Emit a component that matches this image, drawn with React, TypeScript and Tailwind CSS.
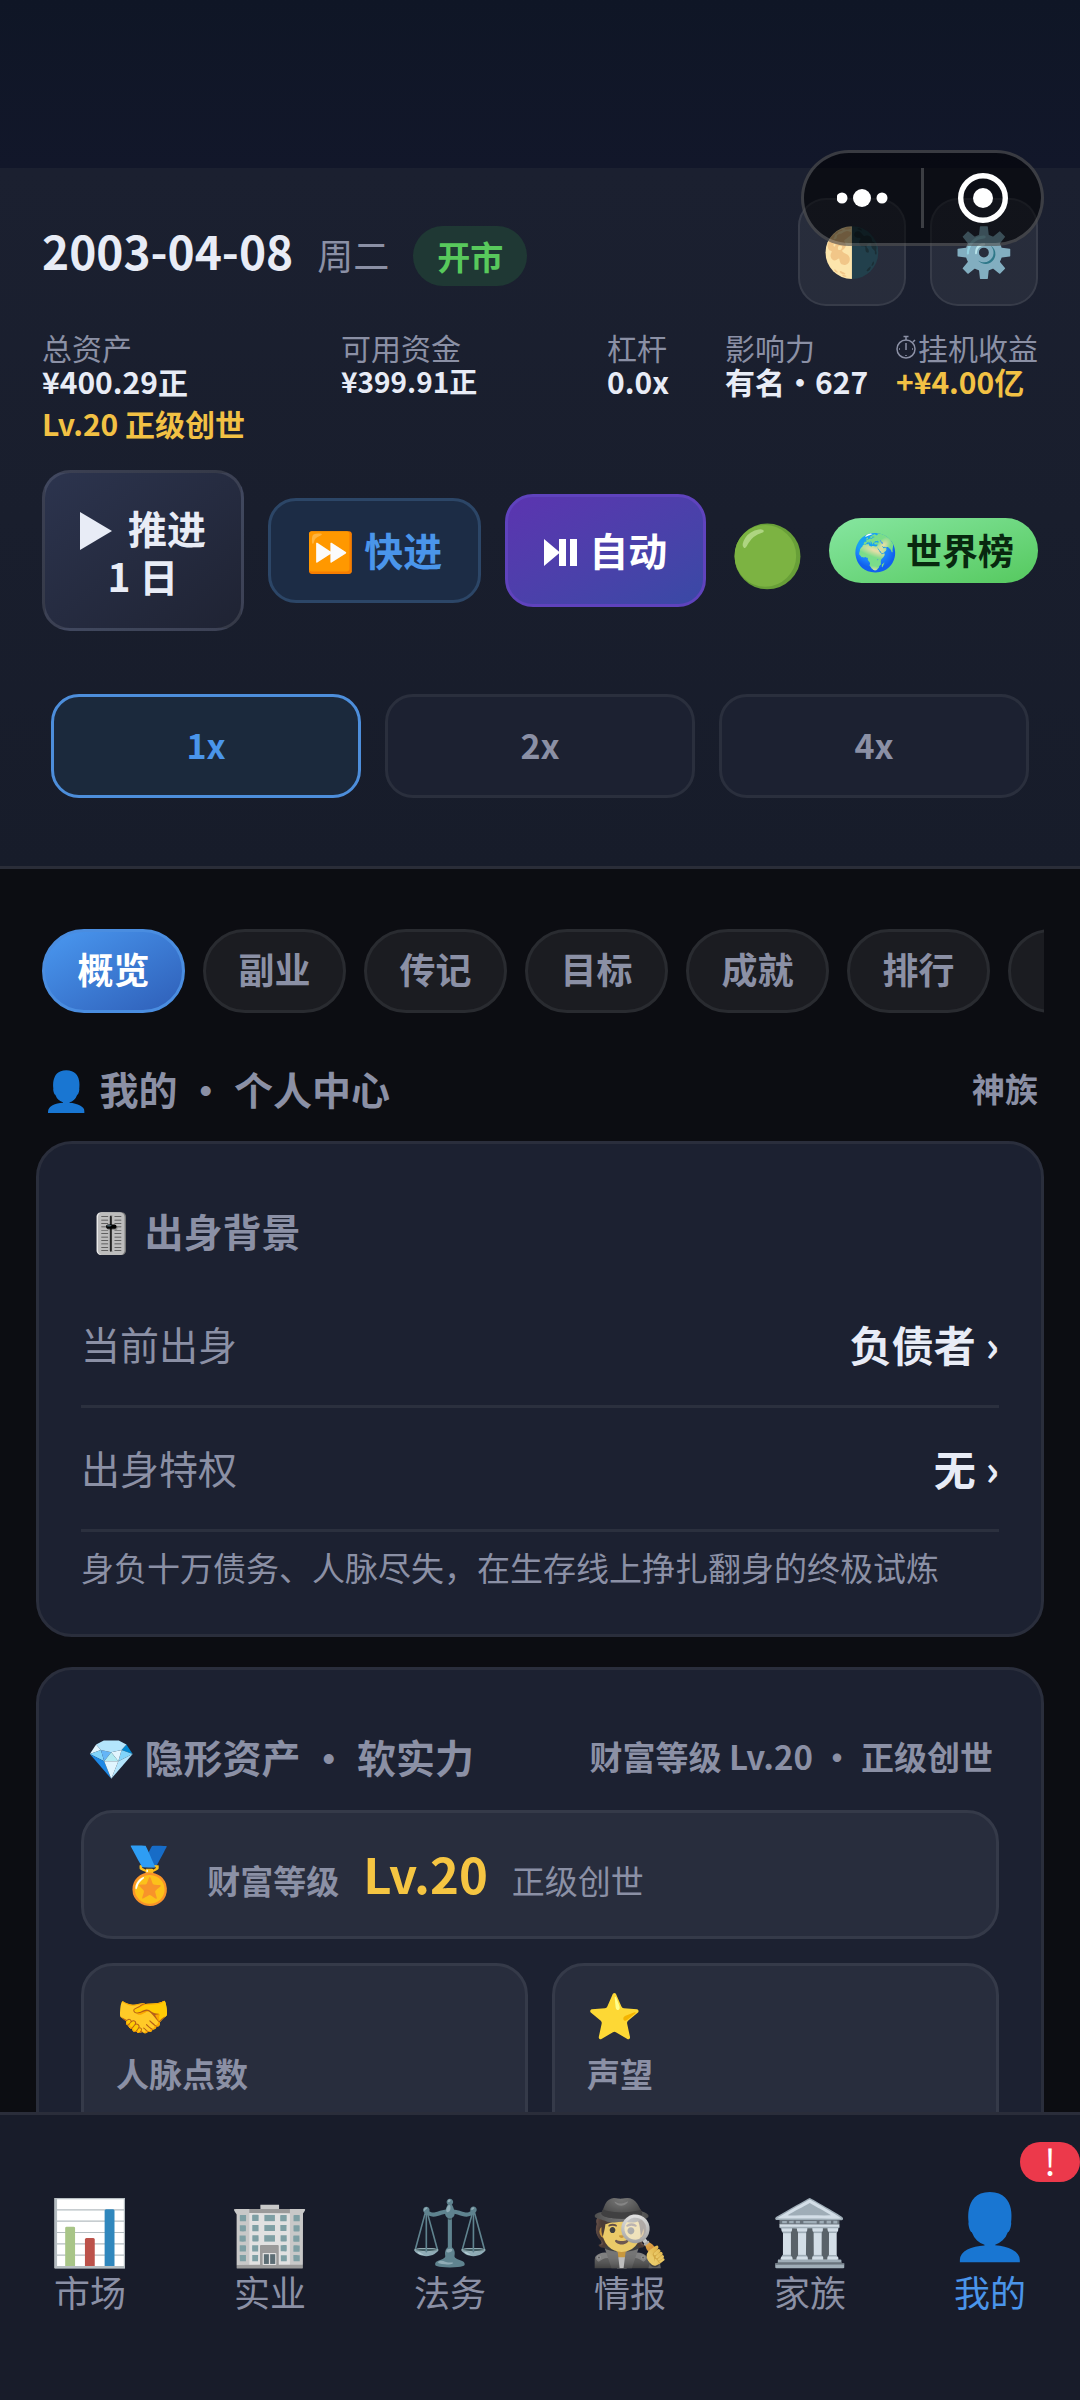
import { useState } from 'react'

const STATS = [
  { label: '总资产', value: '¥400.29正', extra: 'Lv.20 正级创世' },
  { label: '可用资金', value: '¥399.91正', small: true },
  { label: '杠杆', value: '0.0x' },
  { label: '影响力', value: '有名・627' },
  { label: '挂机收益', value: '+¥4.00亿', gold: true, clock: true },
]
const SPEEDS = ['1x', '2x', '4x']
const TABS = ['概览', '副业', '传记', '目标', '成就', '排行', '']
const ORIGIN = [
  { label: '当前出身', value: '负债者' },
  { label: '出身特权', value: '无' },
]
const ASSETS = [
  { icon: '🤝', label: '人脉点数' },
  { icon: '⭐', label: '声望' },
]
const NAV = [
  { icon: '📊', label: '市场' },
  { icon: '🏢', label: '实业' },
  { icon: '⚖️', label: '法务' },
  { icon: '🕵️', label: '情报' },
  { icon: '🏛️', label: '家族' },
  { icon: '👤', label: '我的', badge: '!' },
]

function Capsule() {
  return (
    <div className="absolute right-9 top-[150px] z-10 flex h-24 w-[243px] items-center rounded-full border-[3px] border-white/20 bg-black/55">
      <button aria-label="更多" className="flex flex-1 justify-center">
        <svg width="52" height="20" viewBox="0 0 52 20" fill="#fff">
          <circle cx="5" cy="10" r="5.5" /><circle cx="25" cy="10" r="9" /><circle cx="45" cy="10" r="5.5" />
        </svg>
      </button>
      <span className="h-[60px] w-[3px] bg-white/20" />
      <button aria-label="关闭" className="flex flex-1 justify-center">
        <svg width="50" height="50" viewBox="0 0 50 50" fill="none">
          <circle cx="25" cy="25" r="22.3" stroke="#fff" strokeWidth="5.4" /><circle cx="25" cy="25" r="10" fill="#fff" />
        </svg>
      </button>
    </div>
  )
}

export default function App() {
  const [speed, setSpeed] = useState('1x')
  const [tab, setTab] = useState('概览')
  const [page, setPage] = useState('我的')

  return (
    <div lang="zh-CN" className="relative flex h-screen flex-col overflow-hidden bg-[#0c0d12] font-['Noto_Sans_CJK_SC','Noto_Color_Emoji',sans-serif] text-[#e8ecf6]">
      <Capsule />
      <div className="h-[168px] shrink-0 bg-linear-to-b from-[#0f1626] to-[#12172a]" />

      <header className="shrink-0 border-b-[3px] border-[#2a2d38] bg-linear-to-b from-[#1b2030] to-[#171c2a] px-[42px] pt-[30px] pb-[68px]">
        <div className="flex items-center justify-between">
          <div className="flex items-baseline gap-6 pt-2">
            <h1 className="text-[46px] leading-none font-bold">2003-04-08</h1>
            <span className="text-[36px] leading-none text-[#8b90a5]">周二</span>
            <span className="rounded-full bg-[#1f3834] px-6 text-[33px] leading-[60px] font-bold text-[#58c95c]">开市</span>
          </div>
          <div className="flex gap-6">
            {['🌗', '⚙️'].map(i => (
              <button key={i} className="size-[108px] rounded-[28px] border-2 border-white/8 bg-white/6 pb-2 text-[48px] leading-none">{i}</button>
            ))}
          </div>
        </div>

        <div className="mt-6 grid grid-cols-[299fr_266fr_118fr_171fr_142fr] text-[30px] leading-[34px]">
          {STATS.map(s => (
            <div key={s.label} className="whitespace-nowrap">
              <p className="flex items-center text-[#8b90a5]">
                {s.clock && (
                  <svg width="22" height="26" viewBox="0 0 22 26" fill="none" stroke="#8b90a5" strokeWidth="1.5">
                    <circle cx="10" cy="15" r="9" /><path d="M10 6V3M7.5 2.5h5M17 8l2-2M10 9v7M10 22v-1M3 15h1M16 15h1" />
                  </svg>
                )}
                {s.label}
              </p>
              <p className={`font-bold ${s.small ? 'text-[28px]' : ''} ${s.gold ? 'text-[#f2c144]' : ''}`}>{s.value}</p>
              {s.extra && <p className="mt-2 font-bold text-[#f2c144]">{s.extra}</p>}
            </div>
          ))}
        </div>

        <div className="mt-[30px] flex items-center gap-6 text-[39px] leading-[48px] font-bold">
          <button className="h-[161px] flex-1 rounded-[28px] border-[3px] border-white/10 bg-linear-to-br from-[#2c344e] to-[#1f2333]">
            <svg className="mr-4 -mt-1 inline" width="32" height="38" viewBox="0 0 32 38" fill="currentColor"><path d="M0 0l32 19L0 38z" /></svg>
            推进<br />1 日
          </button>
          <button className="h-[105px] rounded-[28px] border-[3px] border-[#2c4667] bg-[#1c2c45] px-9 pb-1 text-[#4a95ea]">⏩ 快进</button>
          <button className="flex h-[113px] items-center gap-3 rounded-[28px] border-[3px] border-[#5f43bd] bg-linear-to-br from-[#5b34b0] to-[#3949a5] px-9 pb-1 text-white">
            <svg className="mt-2" width="33" height="27" viewBox="0 0 33 27" fill="currentColor"><path d="M0 0l16 13.5L0 27zM15 0h7v27h-7zM26 0h7v27h-7z" /></svg>
            自动
          </button>
          <button className="text-[60px] leading-none">🟢</button>
          <button className="h-[65px] rounded-full bg-linear-to-br from-[#86e6a0] to-[#55c95e] px-6 pb-1 text-[36px] text-[#08280f]">🌍 世界榜</button>
        </div>

        <div className="mt-[63px] grid grid-cols-3 gap-6 px-[9px]">
          {SPEEDS.map(s => (
            <button key={s} onClick={() => setSpeed(s)}
              className={`h-[104px] rounded-[28px] border-[3px] pb-1 text-[34px] font-bold ${speed === s ? 'border-[#4d8edb] bg-[#1b293c] text-[#4a95ea]' : 'border-[#2a2f3d] bg-[#1c2131] text-[#8b90a5]'}`}>
              {s}
            </button>
          ))}
        </div>
      </header>

      <main className="min-h-0 flex-1 overflow-hidden px-9 pt-[60px]">
        <div className="flex gap-[18px] overflow-hidden pl-1.5">
          {TABS.map(t => (
            <button key={t} onClick={() => setTab(t)}
              className={`h-[84px] w-[143px] shrink-0 rounded-full border-[3px] pb-1.5 text-[36px] leading-none font-bold ${tab === t ? 'border-[#4a8de0] bg-linear-to-br from-[#4a98f0] to-[#2f5fb8] text-white' : 'border-[#292b30] bg-[#1b1c21] text-[#8b90a5]'}`}>
              {t}
            </button>
          ))}
        </div>

        <div className="mt-[45px] flex items-center justify-between px-1.5 leading-[60px] font-bold text-[#8b90a5]">
          <h2 className="text-[39px]">👤 我的 ・ 个人中心</h2>
          <span className="text-[33px]">神族</span>
        </div>

        <section className="mt-[23px] h-[496px] rounded-[36px] border-[3px] border-[#2a2e3c] bg-[#1c2131] px-[42px]">
          <h3 className="px-1.5 pt-14 pb-6 text-[39px] leading-[60px] font-bold text-[#8b90a5]">🎚️ 出身背景</h3>
          {ORIGIN.map(o => (
            <div key={o.label} className="flex h-[124px] items-center justify-between border-b-[3px] border-[#2b303e] pb-0.5">
              <span className="text-[39px] text-[#8b90a5]">{o.label}</span>
              <button className="text-[42px] font-bold">{o.value} ›</button>
            </div>
          ))}
          <p className="mt-2.5 text-[33px] leading-[50px] text-[#8b90a5]">身负十万债务、人脉尽失，在生存线上挣扎翻身的终极试炼</p>
        </section>

        <section className="mt-[30px] rounded-[36px] border-[3px] border-[#2a2e3c] bg-[#1c2131] px-[42px] pb-[42px]">
          <div className="flex items-center justify-between px-1.5 pt-14 pb-6 leading-[60px] font-bold text-[#8b90a5]">
            <h3 className="text-[39px]">💎 隐形资产 ・ 软实力</h3>
            <span className="text-[33px]">财富等级 Lv.20 ・ 正级创世</span>
          </div>
          <div className="flex h-[129px] items-center rounded-[32px] border-[3px] border-[#353a49] bg-[#282d3d] px-8">
            <span className="mr-6 pb-2 text-[54px] leading-none">🏅</span>
            <div className="flex items-baseline gap-6 pt-1 text-[33px] text-[#8b90a5]">
              <span className="font-bold">财富等级</span>
              <b className="text-[49px] leading-none text-[#f5c542]">Lv.20</b>
              <span>正级创世</span>
            </div>
          </div>
          <div className="mt-6 grid grid-cols-2 gap-6">
            {ASSETS.map(a => (
              <div key={a.label} className="h-[220px] rounded-[32px] border-[3px] border-[#353a49] bg-[#282d3d] px-8 pt-4">
                <p className="text-[44px] leading-[62px]">{a.icon}</p>
                <p className="mt-1 text-[33px] leading-[50px] font-bold text-[#8b90a5]">{a.label}</p>
              </div>
            ))}
          </div>
        </section>
      </main>

      <nav className="grid h-[288px] shrink-0 grid-cols-6 border-t-[3px] border-[#2a2d3a] bg-[#181c2a]">
        {NAV.map(n => (
          <button key={n.label} onClick={() => setPage(n.label)}
            className={`relative flex flex-col items-center pt-[73px] text-[36px] leading-[50px] ${page === n.label ? 'text-[#4a95ea]' : 'text-[#8b90a5]'}`}>
            <span className={`text-[64px] leading-[78px] ${page === n.label ? '-mt-1.5 mb-1.5' : 'grayscale-[0.4]'}`}>{n.icon}</span>
            {n.label}
            {n.badge && <span className="absolute top-[27px] right-0 h-10 w-[60px] rounded-full bg-[#ec394b] text-[36px] leading-9 text-white">{n.badge}</span>}
          </button>
        ))}
      </nav>
    </div>
  )
}
